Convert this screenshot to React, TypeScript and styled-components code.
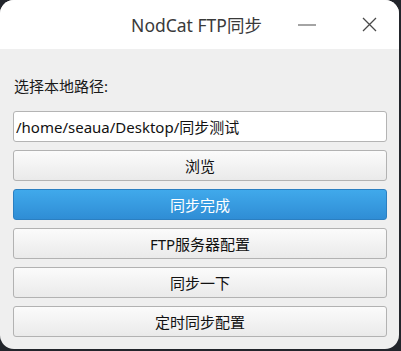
import React, { useState } from 'react';
import styled, { createGlobalStyle, css } from 'styled-components';

const GlobalStyle = createGlobalStyle`
  html, body {
    margin: 0;
    padding: 0;
    background: #22252b;
  }

  body {
    font-family: 'Noto Sans', 'Noto Sans CJK SC', sans-serif;
  }
`;

const Window = styled.div`
  display: flex;
  flex-direction: column;

  width: 399px;
  height: 349px;

  border-radius: 14px;
  overflow: hidden;

  background: #efefef;
`;

const TitleBar = styled.header`
  display: grid;
  grid-template-columns: 1fr auto 1fr;
  align-items: center;

  height: 49px;
  flex-shrink: 0;

  background: #ffffff;
`;

const Title = styled.h1`
  grid-column: 2;
  margin: 0 0 0 -6px;

  font-weight: 400;
  font-size: 17.5px;
  color: #3a3a3a;
`;

const WindowControls = styled.div`
  grid-column: 3;
  justify-self: end;

  display: flex;
  align-items: center;
  gap: 36px;

  padding-right: 17px;
`;

const ControlButton = styled.button`
  display: flex;
  align-items: center;
  justify-content: center;

  width: 26px;
  height: 26px;
  padding: 0;

  border: none;
  background: transparent;
`;

const Content = styled.main`
  display: flex;
  flex-direction: column;

  padding: 26px 12px 0 13px;
`;

const Label = styled.label`
  margin-left: 1px;
  margin-bottom: 14px;

  font-size: 15px;
  line-height: 22px;
  color: #1a1a1a;
`;

const PathInput = styled.input`
  box-sizing: border-box;
  height: 31px;
  padding: 0 2px;
  margin-bottom: 8px;

  border: 1px solid #b4b4b4;
  border-radius: 3px;
  background: #ffffff;

  font-family: 'Noto Sans', 'Noto Sans CJK SC', sans-serif;
  font-size: 15px;
  color: #111;

  outline: none;
`;

const ButtonList = styled.div`
  display: flex;
  flex-direction: column;
  gap: 8px;
`;

const ActionButton = styled.button<{ $primary?: boolean }>`
  box-sizing: border-box;
  height: 31px;

  border: 1px solid #b2b2b2;
  border-radius: 3px;
  background: linear-gradient(#fbfbfb, #eaeaea);

  font-family: 'Noto Sans', 'Noto Sans CJK SC', sans-serif;
  font-size: 15px;
  color: #111;

  ${(props) =>
    props.$primary &&
    css`
      border-color: #2b7fc1;
      background: linear-gradient(#40a9eb, #2f8dd5);
      color: #ffffff;
    `}
`;

function App() {
  const [path, setPath] = useState('/home/seaua/Desktop/同步测试');

  return (
    <>
      <GlobalStyle />
      <Window>
        <TitleBar>
          <Title>NodCat FTP同步</Title>
          <WindowControls>
            <ControlButton aria-label="minimize">
              <svg width="18" height="2" viewBox="0 0 18 2">
                <line x1="0" y1="1" x2="18" y2="1" stroke="#4a4a4a" strokeWidth="1.2" />
              </svg>
            </ControlButton>
            <ControlButton aria-label="close">
              <svg width="15" height="15" viewBox="0 0 15 15">
                <path d="M1 1 L14 14 M14 1 L1 14" stroke="#4a4a4a" strokeWidth="1.3" />
              </svg>
            </ControlButton>
          </WindowControls>
        </TitleBar>
        <Content>
          <Label>选择本地路径:</Label>
          <PathInput value={path} onChange={(e) => setPath(e.target.value)} />
          <ButtonList>
            <ActionButton>浏览</ActionButton>
            <ActionButton $primary>同步完成</ActionButton>
            <ActionButton>FTP服务器配置</ActionButton>
            <ActionButton>同步一下</ActionButton>
            <ActionButton>定时同步配置</ActionButton>
          </ButtonList>
        </Content>
      </Window>
    </>
  );
}

export default App;
